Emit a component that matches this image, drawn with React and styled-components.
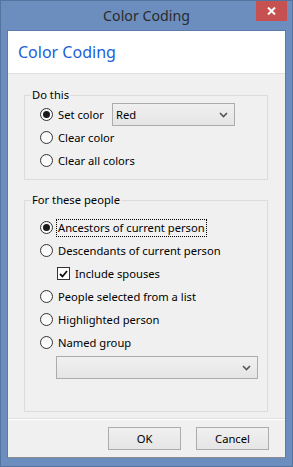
import styled, { createGlobalStyle } from "styled-components";

const GlobalStyle = createGlobalStyle`
  html, body {
    margin: 0;
    padding: 0;
    background: #ffffff;
  }
  body {
    font-family: "Noto Sans", "Open Sans", sans-serif;
    font-size: 11.2px;
    color: #000;
  }
`;

const Window = styled.div`
  box-sizing: border-box;
  width: 293px;
  height: 467px;
  background: #6c8ebf;
  border: 1px solid #52749f;
  padding: 0 6px 8px 6px;
  display: flex;
  flex-direction: column;
`;

const TitleBar = styled.div`
  height: 29px;
  display: grid;
  grid-template-columns: 1fr auto 1fr;
  align-items: start;
`;

const TitleText = styled.div`
  grid-column: 2;
  align-self: center;
  font-size: 14.2px;
  color: #2b2b2b;
  padding-bottom: 1px;
`;

const CloseButton = styled.div`
  grid-column: 3;
  justify-self: end;
  width: 31px;
  height: 20px;
  margin-right: -1px;
  background: #c75050;
  display: flex;
  align-items: center;
  justify-content: center;
`;

const Client = styled.div`
  flex: 1;
  display: flex;
  flex-direction: column;
  background: #f0f0f0;
  border: 1px solid #5a7cab;
  border-bottom-color: #8b8b8b;
`;

const Header = styled.div`
  height: 42px;
  background: #ffffff;
  border-bottom: 1px solid #dfdfdf;
  display: flex;
  align-items: center;
  padding-left: 10px;
  font-size: 16px;
  color: #1b5fd9;
`;

const Body = styled.div`
  flex: 1;
  display: flex;
  flex-direction: column;
`;

const Group = styled.fieldset`
  margin: ${(p) => p.$top}px 17px 0 16px;
  padding: ${(p) => p.$padTop}px 6px ${(p) => p.$padBottom}px 6px;
  border: 1px solid #dcdcdc;
  min-width: 0;
`;

const Legend = styled.legend`
  padding: 0 1px;
  line-height: 16px;
`;

const Options = styled.div`
  margin-left: 9px;
  display: flex;
  flex-direction: column;
`;

const Row = styled.div`
  height: 23px;
  display: flex;
  align-items: center;
  padding-left: ${(p) => p.$indent || 0}px;
`;

const Radio = styled.span`
  box-sizing: border-box;
  width: 13px;
  height: 13px;
  border-radius: 50%;
  border: 1px solid #333;
  background: linear-gradient(#f4f4f4, #ffffff);
  display: flex;
  align-items: center;
  justify-content: center;
  flex-shrink: 0;

  &::after {
    content: "";
    width: 7px;
    height: 7px;
    border-radius: 50%;
    background: #1a1a1a;
    display: ${(p) => (p.$checked ? "block" : "none")};
  }
`;

const Check = styled.span`
  box-sizing: border-box;
  width: 13px;
  height: 13px;
  border: 1px solid #333;
  background: #fff;
  display: flex;
  align-items: center;
  justify-content: center;
  flex-shrink: 0;
`;

const Label = styled.span`
  margin-left: 4px;
  padding: 0 1px;
  line-height: 16px;
  outline: ${(p) => (p.$focus ? "1px dotted #000" : "none")};
  white-space: nowrap;
`;

const SetLabel = styled(Label)`
  width: 49px;
`;

const Combo = styled.div`
  box-sizing: border-box;
  width: ${(p) => p.$width}px;
  height: 23px;
  margin-left: ${(p) => p.$left}px;
  margin-top: ${(p) => p.$mt || 0}px;
  border: 1px solid #acacac;
  background: linear-gradient(#f0f0f0, #e5e5e5);
  display: flex;
  align-items: center;
  justify-content: space-between;
  padding: 0 6px 0 3px;
`;

const Footer = styled.div`
  box-sizing: border-box;
  height: 39px;
  border-top: 1px solid #dfdfdf;
  box-shadow: inset 0 1px 0 #ffffff;
  display: flex;
  justify-content: flex-end;
  align-items: flex-start;
  gap: 15px;
  padding: 8px 16px 0 0;
`;

const Button = styled.button`
  width: 73px;
  height: 23px;
  border: 1px solid #acacac;
  background: linear-gradient(#f0f0f0, #e5e5e5);
  font-family: inherit;
  font-size: 11.2px;
  color: #000;
  padding: 0;
`;

function Chevron() {
  return (
    <svg width="9" height="6" viewBox="0 0 9 6">
      <path d="M1 1 L4.5 4.5 L8 1" fill="none" stroke="#555" strokeWidth="1.6" />
    </svg>
  );
}

function Option({ checked, focus, children }) {
  return (
    <Row>
      <Radio $checked={checked} />
      <Label $focus={focus}>{children}</Label>
    </Row>
  );
}

export default function App() {
  return (
    <>
      <GlobalStyle />
      <Window>
        <TitleBar>
          <TitleText>Color Coding</TitleText>
          <CloseButton>
            <svg width="9" height="8" viewBox="0 0 9 8">
              <path d="M1 0.5 L8 7.5 M8 0.5 L1 7.5" stroke="#fff" strokeWidth="2" />
            </svg>
          </CloseButton>
        </TitleBar>
        <Client>
          <Header>Color Coding</Header>
          <Body>
            <Group $top={13} $padTop={0} $padBottom={7}>
              <Legend>Do this</Legend>
              <Options>
                <Row>
                  <Radio $checked />
                  <SetLabel>Set color</SetLabel>
                  <Combo $width={123} $left={4}>
                    <span>Red</span>
                    <Chevron />
                  </Combo>
                </Row>
                <Option>Clear color</Option>
                <Option>Clear all colors</Option>
              </Options>
            </Group>
            <Group $top={12} $padTop={8} $padBottom={32}>
              <Legend>For these people</Legend>
              <Options>
                <Option checked focus>
                  Ancestors of current person
                </Option>
                <Option>Descendants of current person</Option>
                <Row $indent={17}>
                  <Check>
                    <svg width="9" height="8" viewBox="0 0 9 8">
                      <path d="M1 4 L3.5 6.5 L8 1" fill="none" stroke="#111" strokeWidth="1.8" />
                    </svg>
                  </Check>
                  <Label>Include spouses</Label>
                </Row>
                <Option>People selected from a list</Option>
                <Option>Highlighted person</Option>
                <Option>Named group</Option>
                <Combo $width={202} $left={16} $mt={2}>
                  <span />
                  <Chevron />
                </Combo>
              </Options>
            </Group>
          </Body>
          <Footer>
            <Button>OK</Button>
            <Button>Cancel</Button>
          </Footer>
        </Client>
      </Window>
    </>
  );
}
